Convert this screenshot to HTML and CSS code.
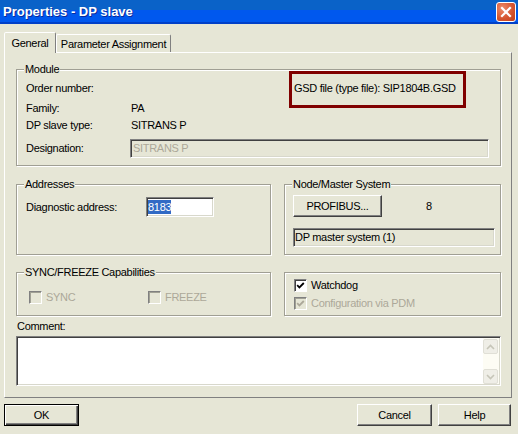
FILE: index.html
```html
<!DOCTYPE html>
<html>
<head>
<meta charset="utf-8">
<title>Properties - DP slave</title>
<link rel="stylesheet" href="styles.css">
</head>
<body>
<div class="titlebar">
  <span class="title">Properties - DP slave</span>
  <div class="close"><svg width="12" height="12" viewBox="0 0 12 12"><path d="M2 2L10 10M10 2L2 10" stroke="#fff" stroke-width="2.2" stroke-linecap="square"/></svg></div>
</div>
<div class="tabs">
  <div class="tab active">General</div>
  <div class="tab">Parameter Assignment</div>
</div>
<div class="panel">
  <div class="group module">
    <div class="gtitle">Module</div>
    <div class="row r-order"><span class="lbl">Order number:</span><span class="gsd">GSD file (type file): SIP1804B.GSD</span></div>
    <div class="row r-family"><span class="lbl">Family:</span><span class="val">PA</span></div>
    <div class="row r-type"><span class="lbl">DP slave type:</span><span class="val">SITRANS P</span></div>
    <div class="row r-desig"><span class="lbl">Designation:</span><div class="field disabled desig">SITRANS P</div></div>
    <div class="mark"></div>
  </div>
  <div class="mid">
    <div class="group addr">
      <div class="gtitle">Addresses</div>
      <div class="row r-diag"><span class="lbl lbl-wide">Diagnostic address:</span><div class="field edit"><span class="sel">8183</span></div></div>
    </div>
    <div class="group node">
      <div class="gtitle">Node/Master System</div>
      <div class="row r-btn"><div class="btn profibus">PROFIBUS...</div><span class="num">8</span></div>
      <div class="field master">DP master system (1)</div>
    </div>
  </div>
  <div class="bot">
    <div class="group sync">
      <div class="gtitle">SYNC/FREEZE Capabilities</div>
      <div class="row r-chk">
        <div class="chk off first"><span class="box dis"></span><span>SYNC</span></div>
        <div class="chk off"><span class="box dis"></span><span>FREEZE</span></div>
      </div>
    </div>
    <div class="group wd">
      <div class="chk r-wd"><span class="box"><svg width="11" height="11" viewBox="0 0 11 11"><path d="M2.2 5.2L4.4 7.5L8.8 3" fill="none" stroke="#000" stroke-width="1.8"/></svg></span><span>Watchdog</span></div>
      <div class="chk off r-pdm"><span class="box dis"><svg width="11" height="11" viewBox="0 0 11 11"><path d="M2.2 5.2L4.4 7.5L8.8 3" fill="none" stroke="#aca899" stroke-width="1.8"/></svg></span><span>Configuration via PDM</span></div>
    </div>
  </div>
  <div class="clabel">Comment:</div>
  <div class="textarea">
    <div class="tbody"></div>
    <div class="sbar">
      <div class="sbtn"><svg width="9" height="6" viewBox="0 0 9 6"><path d="M1 5L4.5 1.5L8 5" fill="none" stroke="#c6c5b8" stroke-width="1.6"/></svg></div>
      <div class="strack"></div>
      <div class="sbtn"><svg width="9" height="6" viewBox="0 0 9 6"><path d="M1 1L4.5 4.5L8 1" fill="none" stroke="#c6c5b8" stroke-width="1.6"/></svg></div>
    </div>
  </div>
</div>
<div class="btnrow">
  <div class="btn default ok">OK</div>
  <div class="btn cancel">Cancel</div>
  <div class="btn help">Help</div>
</div>
</body>
</html>
```
FILE: styles.css
```css
* { box-sizing: border-box; }
body {
  margin: 0;
  width: 518px;
  height: 434px;
  overflow: hidden;
  background: #e6e6d6;
  font: 11px/13px "Liberation Sans", Arial, sans-serif;
  letter-spacing: -0.3px;
  color: #000;
}
.titlebar {
  height: 24px;
  background: linear-gradient(#0a62c8 0, #0a62c8 10px, #0058ee 10px, #0058ee 22px, #0040c8 22px);
  display: flex;
  align-items: center;
  justify-content: space-between;
  padding: 0 2px 0 3px;
}
.title {
  color: #fff;
  font: bold 13px/16px "Liberation Sans", Arial, sans-serif;
  letter-spacing: 0;
  text-shadow: 1px 1px 0 #0a2a9c;
}
.close {
  width: 20px;
  height: 20px;
  border: 1px solid #fff;
  border-radius: 3px;
  background: radial-gradient(circle at 30% 30%, #ec8a69, #d4532e 60%, #c0401c);
  display: flex;
  align-items: center;
  justify-content: center;
}
.tabs {
  display: flex;
  align-items: flex-end;
  height: 20px;
  margin-top: 8px;
  padding-left: 4px;
}
.tab {
  height: 18px;
  width: 115px;
  border: 1px solid;
  border-bottom: none;
  border-color: #fff #808080 transparent #fff;
  border-radius: 2px 2px 0 0;
  text-align: center;
  padding-top: 2px;
  line-height: 14px;
}
.tab.active {
  height: 21px;
  width: 52px;
  margin-bottom: -1px;
  position: relative;
  z-index: 1;
  background: #e6e6d6;
  padding-top: 3px;
}
.panel {
  margin-left: 4px;
  width: 508px;
  height: 346px;
  border: 1px solid;
  border-color: #fff #808080 #808080 #fff;
  padding: 16px 10px 0 11px;
}
.group {
  border: 1px solid #a09f94;
  box-shadow: 1px 1px 0 #fff, inset 1px 1px 0 #fff;
  padding: 0 9px;
  position: relative;
}
.gtitle {
  width: max-content;
  height: 13px;
  line-height: 13px;
  margin: -7px 0 0 -2px;
  padding: 0 1px;
  background: #e6e6d6;
}
.row { display: flex; align-items: center; }
.lbl { width: 105px; flex: none; }
.lbl-wide { width: 120px; }
.module { height: 97px; }
.r-order { margin-top: 4px; height: 16px; }
.r-family { margin-top: 4px; height: 16px; }
.r-type { margin-top: 1px; height: 16px; }
.r-desig { margin-top: 6px; height: 19px; }
.gsd { margin-left: 163px; }
.mark {
  position: absolute;
  left: 272px;
  top: 1px;
  width: 177px;
  height: 37px;
  border: 3px solid #800000;
}
.field {
  border: 1px solid;
  border-color: #808080 #fff #fff #808080;
  box-shadow: inset 1px 1px 0 #404040, inset -1px -1px 0 #d8d8cc;
  display: flex;
  align-items: center;
  white-space: nowrap;
}
.field.disabled { color: #aca899; }
.desig { width: 359px; height: 19px; margin-left: -1px; padding-left: 2px; }
.mid { display: flex; gap: 13px; margin-top: 18px; }
.addr { width: 255px; height: 71px; }
.node { width: 217px; height: 71px; }
.r-diag { margin-top: 6px; height: 20px; }
.edit { width: 68px; height: 20px; background: #fff; padding-left: 1px; }
.sel { background: #316ac5; color: #fff; line-height: 14px; }
.r-btn { margin-top: 4px; height: 22px; }
.btn {
  height: 22px;
  border: 1px solid;
  border-color: #fff #404040 #404040 #fff;
  box-shadow: inset -1px -1px 0 #808080;
  background: #e6e6d6;
  display: flex;
  align-items: center;
  justify-content: center;
}
.profibus { width: 89px; margin-left: -1px; }
.num { margin-left: 44px; }
.master { width: 202px; height: 19px; margin-left: -1px; margin-top: 11px; padding-left: 1px; }
.bot { display: flex; gap: 13px; margin-top: 17px; }
.sync { width: 255px; height: 44px; }
.wd { width: 217px; height: 44px; }
.r-chk { margin-top: 12px; height: 13px; padding-left: 3px; }
.chk { display: flex; align-items: center; gap: 4px; height: 13px; }
.chk.first { width: 119px; flex: none; }
.chk.off { color: #aca899; }
.box {
  width: 13px;
  height: 13px;
  flex: none;
  border: 1px solid;
  border-color: #808080 #fff #fff #808080;
  box-shadow: inset 1px 1px 0 #404040;
  background: #fff;
  display: flex;
  align-items: center;
  justify-content: center;
}
.box.dis { background: #e6e6d6; box-shadow: inset 1px 1px 0 #a0a094; }
.r-wd { margin-top: 6px; }
.r-pdm { margin-top: 5px; }
.clabel { margin-top: 4px; padding-left: 1px; height: 13px; }
.textarea {
  margin-top: 3px;
  width: 485px;
  height: 50px;
  border: 1px solid;
  border-color: #808080 #fff #fff #808080;
  background: #fff;
  box-shadow: inset 1px 1px 0 #404040, inset -1px -1px 0 #d8d8cc;
  padding: 1px;
  display: flex;
}
.tbody { flex: 1; }
.sbar {
  width: 16px;
  background: #fdfcf4;
  display: flex;
  flex-direction: column;
  padding: 1px 1px 0 0;
}
.sbtn {
  height: 15px;
  border: 1px solid #e0dfd6;
  border-radius: 2px;
  background: #efeee7;
  display: flex;
  align-items: center;
  justify-content: center;
}
.strack { flex: 1; }
.btnrow { display: flex; margin-top: 6px; padding: 0 7px 0 4px; }
.ok { width: 75px; }
.btn.default {
  border-color: #000;
  box-shadow: inset 1px 1px 0 #fff, inset -1px -1px 0 #404040, inset -2px -2px 0 #808080;
}
.cancel { width: 75px; margin-left: auto; }
.help { width: 73px; margin-left: 6px; }
```
